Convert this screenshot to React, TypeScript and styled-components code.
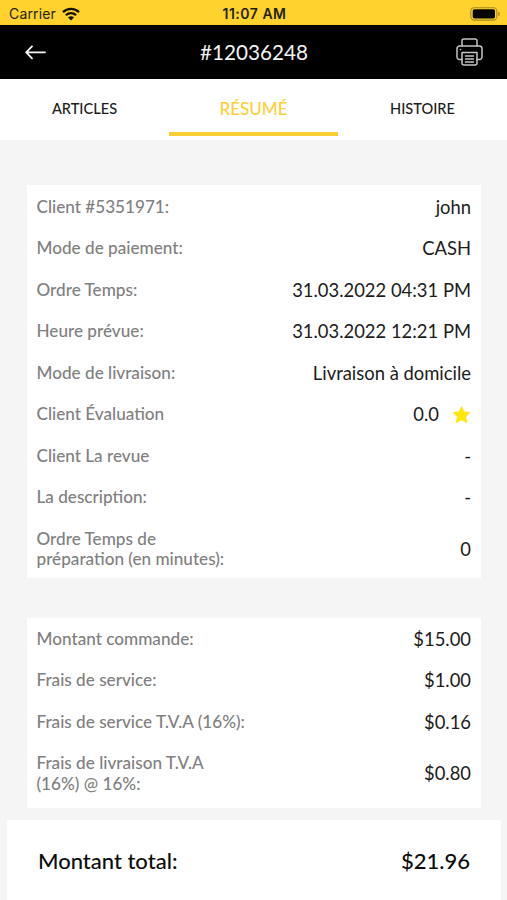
import React from "react";
import styled, { createGlobalStyle } from "styled-components";

const GlobalStyle = createGlobalStyle`
  * { box-sizing: border-box; }
  body { margin: 0; background: #f5f5f5; }
`;

const Screen = styled.div`
  display: flex;
  flex-direction: column;
  height: 900px;
  overflow: hidden;
  background: #f5f5f5;
  font-family: Lato, sans-serif;
  color: #1c1c1c;
`;

const StatusBar = styled.div`
  display: grid;
  grid-template-columns: 1fr auto 1fr;
  align-items: center;
  height: 25px;
  flex: none;
  padding: 2px 7px 0 9px;
  background: #ffd22e;
  color: #251f0a;
  font: 400 14px/20px Inter, sans-serif;
`;

const Carrier = styled.div`
  display: flex;
  align-items: center;
  gap: 6px;
  letter-spacing: 0.15px;
`;

const Clock = styled.div`
  font-size: 14px;
  font-weight: 600;
  letter-spacing: 0.5px;
`;

const BatterySlot = styled.div`
  display: flex;
  justify-content: flex-end;
`;

const Header = styled.header`
  display: grid;
  grid-template-columns: 60px 1fr 60px;
  align-items: center;
  height: 54px;
  flex: none;
  padding: 0 24px 0 25px;
  background: #000;
  color: #f2f2f2;
`;

const Title = styled.h1`
  margin: 0;
  text-align: center;
  font-size: 20.7px;
  font-weight: 400;
  line-height: 26px;
`;

const IconButton = styled.button<{ $end?: boolean }>`
  display: flex;
  justify-content: ${(p) => (p.$end ? "flex-end" : "flex-start")};
  padding: 0;
  border: 0;
  background: none;
  color: inherit;
`;

const Tabs = styled.nav`
  display: grid;
  grid-template-columns: repeat(3, 1fr);
  height: 61px;
  flex: none;
  padding-bottom: 4px;
  background: #fff;
`;

const Tab = styled.button<{ $active?: boolean }>`
  padding: 6px 0 0;
  border: 0;
  border-bottom: 4px solid ${(p) => (p.$active ? "#f8cf35" : "transparent")};
  background: none;
  color: ${(p) => (p.$active ? "#fbd03b" : "#1c1c1c")};
  font: 500 ${(p) => (p.$active ? "17px" : "14.6px")} / 22px Lato, sans-serif;
`;

const Card = styled.section<{ $top: number; $pad: string }>`
  display: flex;
  flex-direction: column;
  flex: none;
  gap: 21px;
  margin: ${(p) => p.$top}px 26px 0 26.5px;
  padding: ${(p) => p.$pad};
  background: #fff;
`;

const Row = styled.div`
  display: flex;
  align-items: center;
  justify-content: space-between;
  line-height: 20.5px;
`;

const Label = styled.span`
  width: 215px;
  color: #808080;
  font-size: 17.15px;
  font-weight: 500;
  white-space: pre-line;
`;

const Value = styled.span`
  display: flex;
  align-items: center;
  gap: 13px;
  font-size: 18.4px;
  font-weight: 400;
  white-space: nowrap;
`;

const Total = styled.footer`
  display: flex;
  justify-content: space-between;
  flex: 1;
  margin: 12px 6px 0 7px;
  padding: 27px 31px 0;
  background: #fff;
  color: #0c0c0c;
  font-size: 22px;
  font-weight: 500;
  line-height: 28px;
`;

const WifiIcon = () => (
  <svg width="18" height="14" viewBox="0 0 18 14" fill="none" stroke="#171304" strokeWidth="2.3">
    <path d="M1 5.1a11.3 11.3 0 0 1 16 0" />
    <path d="M3.9 8.2a7.2 7.2 0 0 1 10.2 0" />
    <path d="M9 13.6 6 10.6a4.25 4.25 0 0 1 6 0Z" fill="#171304" stroke="none" />
  </svg>
);

const BatteryIcon = () => (
  <svg width="30" height="14" viewBox="0 0 30 14">
    <rect x="0.8" y="0.7" width="26" height="12.4" rx="3.6" fill="none" stroke="#a78b21" strokeWidth="1.1" />
    <rect x="2.7" y="2.2" width="22.3" height="9.4" rx="1.8" fill="#080600" />
    <path d="M28.2 4.6c2.1.7 2.1 3.9 0 4.6Z" fill="#a78b21" />
  </svg>
);

const BackIcon = () => (
  <svg width="21" height="15" viewBox="0 0 21 15" fill="none" stroke="#f5f5f5" strokeWidth="1.8" strokeLinecap="round" strokeLinejoin="round">
    <path d="M20 7.3H1.3M7 1.3 1.2 7.3 7 13.3" />
  </svg>
);

const PrinterIcon = () => (
  <svg width="27" height="28" viewBox="0 0 27 28" fill="none" stroke="#c4c4c4" strokeWidth="1.5" strokeLinejoin="round" strokeLinecap="round">
    <path d="M6 8V2.8A1.8 1.8 0 0 1 7.8 1h11.4A1.8 1.8 0 0 1 21 2.8V8" />
    <path d="M6 21.5H3.5A2.5 2.5 0 0 1 1 19v-8.3A2.7 2.7 0 0 1 3.7 8h19.6a2.7 2.7 0 0 1 2.7 2.7V19a2.5 2.5 0 0 1-2.5 2.5H21" />
    <path d="M6 14.5h15v10.7a1.8 1.8 0 0 1-1.8 1.8H7.8A1.8 1.8 0 0 1 6 25.2Z" />
    <path d="M9.5 18h8M9.5 21h8M9.5 24h8M4.5 11.5h.1" />
  </svg>
);

const StarIcon = () => (
  <svg width="19" height="18" viewBox="0 0 18 18">
    <path d="m9 0 2.8 5.6 6.2.7-4.4 4.4 1.2 6.5L9 14.3l-5.8 2.9 1.2-6.5L0 6.3l6.2-.7Z" fill="#ffe60d" />
  </svg>
);

type Entry = { label: string; value: string; starred?: boolean };

const details: Entry[] = [
  { label: "Client #5351971:", value: "john" },
  { label: "Mode de paiement:", value: "CASH" },
  { label: "Ordre Temps:", value: "31.03.2022 04:31 PM" },
  { label: "Heure prévue:", value: "31.03.2022 12:21 PM" },
  { label: "Mode de livraison:", value: "Livraison à domicile" },
  { label: "Client Évaluation", value: "0.0", starred: true },
  { label: "Client La revue", value: "-" },
  { label: "La description:", value: "-" },
  { label: "Ordre Temps de\npréparation (en minutes):", value: "0" },
];

const charges: Entry[] = [
  { label: "Montant commande:", value: "$15.00" },
  { label: "Frais de service:", value: "$1.00" },
  { label: "Frais de service T.V.A (16%):", value: "$0.16" },
  { label: "Frais de livraison T.V.A\n(16%) @ 16%:", value: "$0.80" },
];

const Rows = ({ entries }: { entries: Entry[] }) => (
  <>
    {entries.map((e) => (
      <Row key={e.label}>
        <Label>{e.label}</Label>
        <Value>
          {e.value}
          {e.starred && <StarIcon />}
        </Value>
      </Row>
    ))}
  </>
);

export default function App() {
  return (
    <Screen>
      <GlobalStyle />
      <StatusBar>
        <Carrier>
          Carrier
          <WifiIcon />
        </Carrier>
        <Clock>11:07 AM</Clock>
        <BatterySlot>
          <BatteryIcon />
        </BatterySlot>
      </StatusBar>
      <Header>
        <IconButton aria-label="Retour">
          <BackIcon />
        </IconButton>
        <Title>#12036248</Title>
        <IconButton $end aria-label="Imprimer">
          <PrinterIcon />
        </IconButton>
      </Header>
      <Tabs>
        <Tab>ARTICLES</Tab>
        <Tab $active>RÉSUMÉ</Tab>
        <Tab>HISTOIRE</Tab>
      </Tabs>
      <Card $top={45} $pad="11.75px 10px 8.25px">
        <Rows entries={details} />
      </Card>
      <Card $top={40} $pad="10.5px 10px 14px">
        <Rows entries={charges} />
      </Card>
      <Total>
        <span>Montant total:</span>
        <span>$21.96</span>
      </Total>
    </Screen>
  );
}
